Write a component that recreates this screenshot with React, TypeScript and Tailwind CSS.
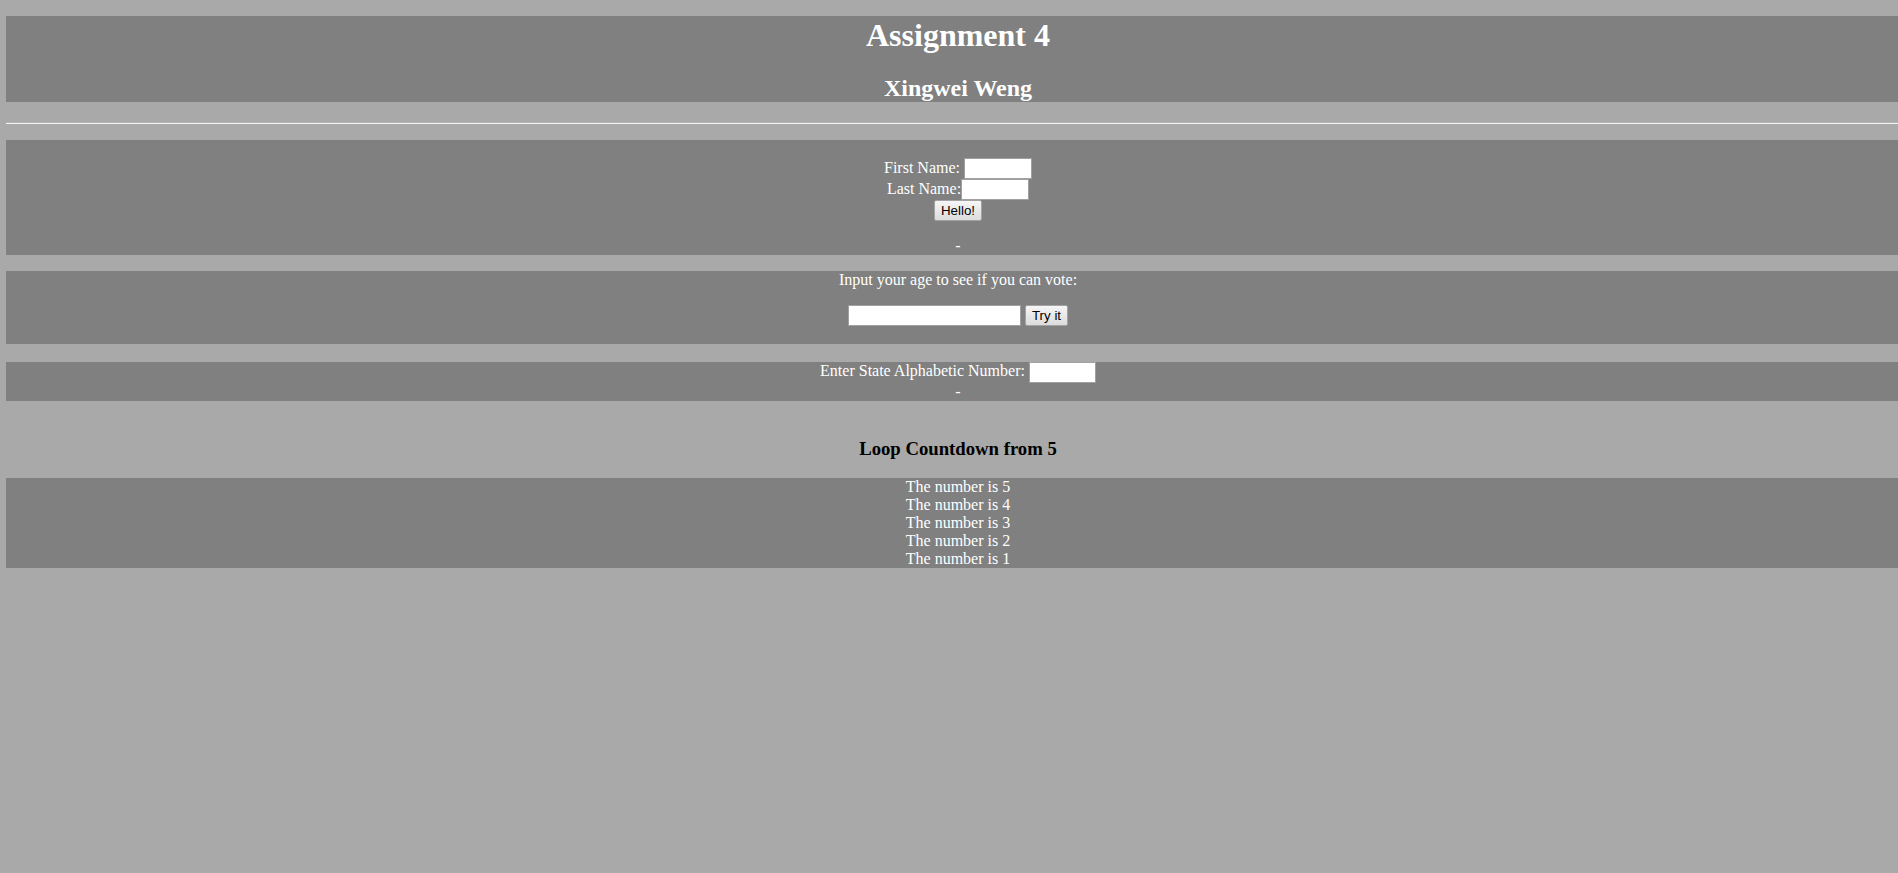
import React from "react";

const inputCls =
  "h-[21px] bg-white border border-[#a0a0a0] px-[2px] outline-none font-['Liberation_Sans',Arial,sans-serif] text-[13.33px] text-black";
const btnCls =
  "h-[21px] px-[6px] border border-[#a3a3a3] rounded-[2px] bg-linear-to-b from-[#f6f6f6] to-[#dcdcdc] font-['Liberation_Sans',Arial,sans-serif] text-[13.33px] leading-[19px] text-black";

export default function App() {
  const nums = [5, 4, 3, 2, 1];
  return (
    <div className="min-h-screen w-full overflow-hidden bg-[#a9a9a9]">
      <div className="ml-[6px] w-[1904px] pt-[16px] text-center font-['Liberation_Serif','Times_New_Roman',serif] text-[16px] text-white">
        {/* Header panel */}
        <div className="bg-[#808080] pt-[1px]">
          <h1 className="text-[32px] font-bold leading-[36px]">Assignment 4</h1>
          <h2 className="mt-[21px] text-[24px] font-bold leading-[28px]">Xingwei Weng</h2>
        </div>

        {/* hr */}
        <div className="mt-[20px] h-0 border-t border-t-[#b4b4b4] border-b border-b-[#f2f2f2]" />

        {/* Name form */}
        <div className="mt-[16px] bg-[#808080] pt-[18px]">
          <div className="flex h-[21px] items-start justify-center">
            <span className="leading-[19px]">First Name:</span>
            <input className={`${inputCls} ml-[4px] w-[68px]`} />
          </div>
          <div className="flex h-[21px] items-start justify-center">
            <span className="leading-[19px]">Last Name:</span>
            <input className={`${inputCls} w-[68px]`} />
          </div>
          <div className="flex h-[21px] items-center justify-center">
            <button className={btnCls}>Hello!</button>
          </div>
          <div className="mt-[16px] leading-[18px]">-</div>
        </div>

        {/* Age vote */}
        <div className="mt-[16px] bg-[#808080] pb-[18px]">
          <p className="leading-[18px]">Input your age to see if you can vote:</p>
          <div className="mt-[16px] flex h-[21px] items-center justify-center gap-[4px]">
            <input className={`${inputCls} w-[173px]`} />
            <button className={btnCls}>Try it</button>
          </div>
        </div>

        {/* State number */}
        <div className="mt-[18px] bg-[#808080]">
          <div className="flex h-[21px] items-start justify-center">
            <span className="leading-[18px]">Enter State Alphabetic Number:</span>
            <input className={`${inputCls} ml-[4px] h-[20px] w-[67px]`} />
          </div>
          <div className="leading-[18px]">-</div>
        </div>

        {/* Loop countdown */}
        <h3 className="mt-[37px] mb-[18px] text-[18.72px] font-bold leading-[22px] text-black">
          Loop Countdown from 5
        </h3>
        <div className="bg-[#808080]">
          {nums.map((n) => (
            <div key={n} className="leading-[18px]">
              The number is {n}
            </div>
          ))}
        </div>
      </div>
    </div>
  );
}
